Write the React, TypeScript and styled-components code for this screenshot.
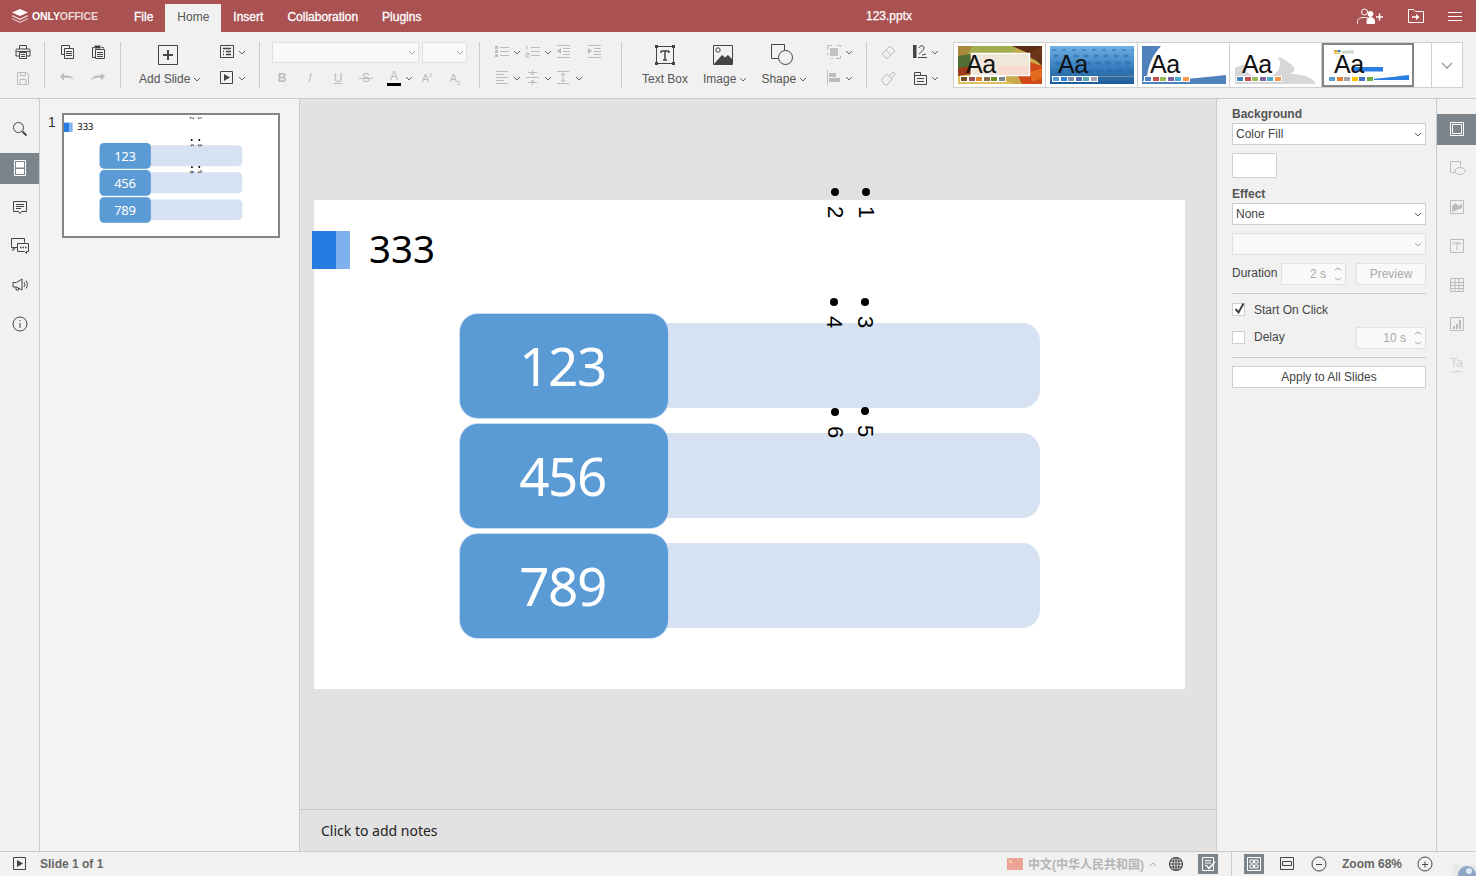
import React from 'react';
import styled, { createGlobalStyle } from 'styled-components';

const Global = createGlobalStyle`
  html, body { margin: 0; padding: 0; background: #f1f1f1; }
  body { font-family: "Liberation Sans", Arial, sans-serif; font-size: 12px; color: #444; }
  * { box-sizing: border-box; }
`;

const Page = styled.div`
  width: 1476px; height: 876px; display: flex; flex-direction: column; overflow: hidden; position: relative;
`;

/* ---------- header ---------- */
const Header = styled.header`
  height: 32px; flex: none; background: #aa5252; color: #fff; display: flex; align-items: flex-end; position: relative;
`;
const Logo = styled.div`
  width: 122px; height: 32px; padding-left: 12px; display: flex; align-items: center; gap: 4px; flex: none;
`;
const LogoText = styled.span`
  font-size: 10.6px; font-weight: 700; letter-spacing: -0.15px; color: #fff;
  em { font-style: normal; color: #ead7d7; }
`;
const Tab = styled.div<{ $active?: boolean }>`
  height: 28px; padding: 0 12px; display: flex; align-items: center; padding-bottom: 3px; white-space: nowrap;
  background: ${p => (p.$active ? '#f1f1f1' : 'transparent')};
  color: ${p => (p.$active ? '#555' : '#fff')};
  -webkit-text-stroke: ${p => (p.$active ? '0' : '0.3px')};
`;
const DocTitle = styled.div`
  position: absolute; left: 889px; top: 9px; transform: translateX(-50%); -webkit-text-stroke: 0.25px; line-height: 14px;
`;
const HeadTools = styled.div`
  margin-left: auto; height: 32px; display: flex; align-items: center; padding-right: 14px; gap: 24px;
`;

/* ---------- icons ---------- */
const Ico = styled.svg<{ $off?: boolean; $on?: boolean }>`
  display: block; flex: none; fill: none; stroke: currentColor; stroke-width: 1;
  color: ${p => (p.$on ? '#fff' : p.$off ? '#bcbcbc' : '#444')};
  .f { fill: currentColor; stroke: none; }
`;
const lines = (x: number, w: number, ys: number[]) => ys.map(y => `M${x} ${y}.5h${w}`).join('');
const P: Record<string, React.ReactNode> = {
  print: <><path d="M6.5 7V3.5h7V7M6.5 14h-3.5v-6a1 1 0 0 1 1-1h12a1 1 0 0 1 1 1v6h-3.5" /><path d="M6.5 10.5h7v6h-7zM8 12.5h4M8 14.5h4" /><path d="M3.500 9.500h13" /></>,
  save: <><path d="M4.500 4.500h9l2 2v10h-11zM7.500 4.500v3h5v-3M7 11.500h6v5H7z" /></>,
  copy: <><path d="M4.500 3.500h8v3M4.500 3.500v9h3" /><path d="M7.500 6.500h9v10h-9zM9 9.500h6M9 11.500h6M9 13.500h6" /></>,
  paste: <><path d="M4.500 5.500h2M13.500 5.500h2v1M4.500 5.500v10h3" /><path d="M6.500 3.500h6v3h-6z" className="f" /><path d="M7.500 7.500h9v9h-9zM9 10.500h6M9 12.500h6M9 14.500h6" /></>,
  undo: <path className="f" d="M3 8l4-3v2.500c5-.5 9 .5 10 4.500-2-2-5-2.500-10-2v3z" />,
  redo: <path className="f" d="M17 8l-4-3v2.500c-5-.5-9 .5-10 4.500 2-2 5-2.500 10-2v3z" />,
  layout: <><path d="M3.500 3.500h13v12h-13z" /><path d="M6 6.500h8M6 9.500h1M9 9.500h5M6 12.500h1M9 12.500h5" strokeWidth="1.3" /></>,
  play: <><path d="M3.500 3.500h12v12h-12z" /><path className="f" d="M7 6l6 3.500L7 13z" /></>,
  bullets: <><path d={lines(8, 9, [5, 9, 13])} /><path className="f" d="M3 4h3v3H3zM3 8h3v3H3zM3 12h3v3H3z" /></>,
  numbers: <><path d={lines(8, 9, [5, 9, 13])} /><path d="M4 3.500v4M3 11h3v1.500H3V15h3" /></>,
  outdent: <><path d={lines(3, 13, [3, 15])} /><path d={lines(9, 7, [6, 9, 12])} /><path className="f" d="M7 6v6L3 9z" /></>,
  indent: <><path d={lines(3, 13, [3, 15])} /><path d={lines(9, 7, [6, 9, 12])} /><path className="f" d="M3 6v6l4-3z" /></>,
  alignL: <path d="M4 3.500h12M4 6.500h8M4 9.500h12M4 12.500h8M4 15.500h12" />,
  alignV: <><path d="M3 9.500h13" /><path d="M5 4.500h9M5 14.500h9" /><path d="M9.500 2v5M8 5.500l1.500 1.500L11 5.500M9.500 17v-5M8 13.500L9.500 12l1.500 1.500" /></>,
  spacing: <><path d="M3 3.500h12M3 15.500h12M9 5v9" /><path d="M7 7l2-2 2 2M7 12l2 2 2-2" /></>,
  addbox: <><path d="M.500.500h19v19h-19z" /><path d="M10 5v10M5 10h10" strokeWidth="2" /></>,
  textbox: <><path d="M2.500 2.500h17v17h-17z" /><path className="f" d="M1 1h3v3H1zM18 1h3v3h-3zM1 18h3v3H1zM18 18h3v3h-3z" /><path d="M7 7h8M11 7v9M7 7v2M15 7v2M9 16h4" strokeWidth="1.5" /></>,
  image: <><path d="M.500.500h19v19h-19z" /><circle cx="5" cy="5" r="2.200" /><path className="f" d="M1 19l8-9 3 2.500 3-2.500 4 4v5z" /></>,
  shape: <><path d="M7 14.500H.500V.500h13V6" /><circle cx="14.500" cy="13.500" r="7" /></>,
  arrange: <><path d="M3.500 8V3.500H8M13 3.500h3.500V5M16.500 14v2.500H12" /><path className="f" d="M6 6h8v8H6z" opacity=".9" /><path d="M3.500 11v2M7 16.500h2" /></>,
  alignObj: <><path d="M3.500 2v15" /><path className="f" d="M5 5h7v4H5zM5 10h11v4H5z" /></>,
  eraser: <><path d="M3 12l7-7a1.500 1.500 0 0 1 2 0l3 3a1.500 1.500 0 0 1 0 2l-6 6H7z" /><path d="M7 8l5 5" /></>,
  colors: <><path className="f" d="M3 3h3.500v13H3z" /><path d="M9 6c1-3 5-3 5 0 0 2-3 4-5 6M8 15.500h9M12 13l4-1" /></>,
  brush: <><path d="M3 11l5-5 5 5-5 6H6l-3-4z" /><path d="M10 8l4-4 2 2-3 4" /></>,
  slideSize: <><path d="M4.500 4.500h6v3h6v9h-12zM7 10.500h7M7 13.500h7" /><path d="M4.500 7.500h6" /></>,
  search: <><circle cx="8.500" cy="8.500" r="5" /><path d="M12.500 12.500l4 4" strokeWidth="2" /></>,
  slidePanel: <><path d="M4.500 2.500h11v15h-11z" stroke="#fff" /><path className="f" d="M6 4h8v5.500H6zM6 11h8v5H6z" style={{ color: '#fff' }} /></>,
  comment: <><path d="M3.500 4.500h13v10h-5l-1.500 2-1.500-2h-5z" /><path d="M6 7.500h8M6 9.500h8M6 11.500h5" /></>,
  chat: <><path d="M1.500 2.500h13v4M7 11.500H1.500v-9M3 11.500v3l2.500-3" /><path d="M7.500 7.500h11v8h-2v2l-2-2h-7z" /><path d="M10 11.500h1.500M12.500 11.500H14M15 11.500h1.500" strokeWidth="1.500" /></>,
  speaker: <><path d="M3 7.500h3.500L12 4v11l-5.500-3H3zM6 12v3h2.500v-2" /><path d="M14 7c1 1.500 1 3.500 0 5M16 5.500c1.800 2.500 1.800 5.500 0 8" /></>,
  info: <><circle cx="10" cy="10" r="7" /><path d="M10 9v5" /><path className="f" d="M9.500 6h1v1.200h-1z" /></>,
  fit: <><path d="M3.500 3.500h13v13h-13z" stroke="#fff" /><path d="M5.500 5.500h9v9h-9z" stroke="#fff" /></>,
  rShape: <><path d="M9 14.500H3.500v-11h10V8" /><ellipse cx="13" cy="13" rx="5" ry="3.500" /></>,
  rImage: <><path d="M3.500 3.500h13v13h-13z" /><path className="f" d="M5 15V9l3-3 4 3 3-3v5z" /></>,
  rText: <><path d="M3.500 3.500h13v13h-13z" /><path d="M6.500 7h7M10 7v7M6.500 7v1.500M13.500 7v1.500" /></>,
  rTable: <><path d="M3.500 3.500h13v13h-13zM3.500 7.500h13M3.500 10.500h13M3.500 13.500h13M8 3.500v13M12 3.500v13" /></>,
  rChart: <><path d="M3.500 3.500h13v13h-13z" /><path className="f" d="M6 12h2v3H6zM9 10h2v5H9zM12 6h2v9h-2z" /></>,
  globe: <><circle cx="10" cy="10" r="6.500" strokeWidth="1.200" /><ellipse cx="10" cy="10" rx="3" ry="6.500" /><path d="M3.500 10h13M4.500 7h11M4.500 13h11M10 3.500v13" /></>,
  spell: <><path d="M4.500 3.500h11v13h-11z" stroke="#fff" /><path d="M7 6.500h6M7 9h6M7 11.500h2" stroke="#fff" /><path d="M9 12l2 2.500 6-7" stroke="#fff" strokeWidth="1.500" /></>,
  grid: <><path d="M3.500 3.500h13v13h-13z" stroke="#fff" /><path d="M6 6h3.500v3H6zM10.500 6H14v3h-3.500zM6 11h3.500v3H6zM10.500 11H14v3h-3.500z" stroke="#fff" /></>,
  fitWidth: <><path d="M3.500 3.500h13v12h-13z" /><path d="M5.500 7.500h9v4h-9z" /></>,
  minus: <><circle cx="10" cy="10" r="7" /><path d="M7 10.500h6" /></>,
  plus: <><circle cx="10" cy="10" r="7" /><path d="M7 10.500h6M10 7.500v6" /></>,
};
const Icon = ({ n, off, on, size = 20 }: { n: string; off?: boolean; on?: boolean; size?: number }) => (
  <Ico width={size} height={size} viewBox={`0 0 ${size} ${size}`} $off={off} $on={on}>{P[n]}</Ico>
);
const CaretSvg = styled.svg<{ $off?: boolean }>`
  display: block; flex: none; fill: none; stroke: ${p => (p.$off ? '#aaa' : '#666')}; stroke-width: 1;
`;
const Caret = ({ off }: { off?: boolean }) => (
  <CaretSvg $off={off} width="8" height="5" viewBox="0 0 8 5"><path d="M1 1l3 3 3-3" /></CaretSvg>
);

/* ---------- toolbar ---------- */
const Toolbar = styled.div`
  height: 67px; flex: none; background: #f1f1f1; border-bottom: 1px solid #cbcbcb; display: flex; padding-top: 10px; align-items: flex-start;
`;
const Sep = styled.div`
  width: 1px; height: 46px; background: #cbcbcb; flex: none;
`;
const Group = styled.div<{ $w: number; $pl: number; $gap?: number }>`
  width: ${p => p.$w}px; padding-left: ${p => p.$pl}px; height: 46px; flex: none; display: flex; gap: ${p => p.$gap ?? 0}px;
`;
const Col = styled.div<{ $ml?: number }>`
  display: flex; flex-direction: column; gap: 6px; flex: none; margin-left: ${p => p.$ml ?? 0}px;
`;
const Row = styled.div<{ $gap?: number }>`
  height: 20px; display: flex; align-items: center; gap: ${p => p.$gap ?? 0}px;
`;
const Drop = styled.div<{ $w?: number }>`
  display: flex; align-items: center; gap: 1px; width: ${p => p.$w ?? 29}px; flex: none;
`;
const Big = styled.div<{ $mr?: number }>`
  display: flex; flex-direction: column; align-items: center; height: 46px; flex: none; margin-right: ${p => p.$mr ?? 0}px;
`;
const BigIcon = styled.div<{ $shift?: number }>`
  height: 26px; display: flex; align-items: center; justify-content: center; margin-bottom: 4px; padding-right: ${p => p.$shift ?? 0}px;
`;
const BigLabel = styled.div`
  line-height: 14px; color: #555; display: flex; align-items: center; gap: 3px; white-space: nowrap;
`;
const ToolCombo = styled.div<{ $w: number }>`
  width: ${p => p.$w}px; height: 21px; border: 1px solid #e1e1e1; background: #f9f9f9; display: flex; align-items: center; justify-content: flex-end; padding-right: 2px; flex: none;
`;
const FontBtn = styled.span<{ $bold?: boolean; $italic?: boolean; $under?: boolean; $strike?: boolean; $small?: boolean; $ml?: number }>`
  width: 20px; flex: none; text-align: center; color: #bcbcbc; line-height: 14px; position: relative;
  font-size: ${p => (p.$small ? 11 : 12)}px; margin-left: ${p => p.$ml ?? 0}px;
  font-weight: ${p => (p.$bold ? 700 : 400)}; font-style: ${p => (p.$italic ? 'italic' : 'normal')};
  text-decoration: ${p => (p.$under ? 'underline' : 'none')};
  sup, sub { font-size: 6px; line-height: 0; }
  ${p => p.$strike && `&::after { content: ''; position: absolute; left: 3px; right: 3px; top: 7px; height: 1px; background: #bcbcbc; }`}
`;
const ColorA = styled.span`
  width: 20px; flex: none; display: flex; flex-direction: column; align-items: center; color: #bcbcbc; line-height: 12px;
  &::after { content: ''; width: 14px; height: 3px; background: #000; margin-top: 1px; }
`;

/* ---------- theme gallery ---------- */
const Gallery = styled.div`
  width: 510px; height: 46px; flex: none; border: 1px solid #cfcfcf; background: #fff; display: flex; margin-top: 0;
`;
const ThemeCard = styled.div<{ $selected?: boolean }>`
  width: 92px; flex: none; position: relative; background: #fff; border-right: 1px solid #cfcfcf;
  outline: ${p => (p.$selected ? '2px solid #858585' : 'none')}; outline-offset: -2px;
  svg { position: absolute; left: 4px; top: 3px; }
`;
const ThemeAa = styled.span`
  position: absolute; left: 12px; top: 7px; font-size: 25px; line-height: 29px; color: #111; letter-spacing: -0.5px;
`;
const Swatches = styled.div`
  position: absolute; left: 6px; top: 33px; display: flex; gap: 1.500px; padding: 1px; background: #fff;
`;
const Swatch = styled.i<{ $c: string }>`
  display: block; width: 6px; height: 3.500px; background: ${p => p.$c};
`;
const Spacer = styled.div`
  flex: 1; background: #fff; border-right: 1px solid #cfcfcf;
`;
const More = styled.div`
  width: 30px; flex: none; display: flex; align-items: center; justify-content: center;
`;

const themeArt: React.ReactNode[] = [
  <svg key="a" width="84" height="38" viewBox="0 0 84 38">
    <rect width="84" height="38" fill="#c9a94a" />
    <path d="M0 0h26L10 12 0 16z" fill="#a8893a" /><path d="M14 0h46l-6 8H10z" fill="#a3ad50" />
    <path d="M54 0h30v20l-12-12z" fill="#5b2c16" /><path d="M66 8l18 10V0z" fill="#6a3518" />
    <path d="M60 30l12-14 12 4v18H64z" fill="#cf4a16" /><path d="M72 26l12-4v10l-10 4z" fill="#e06a20" />
    <path d="M0 26l14 4 28 2 14 6H0z" fill="#dcc060" /><path d="M0 10l13-2v14L0 24z" fill="#4f6e34" />
    <path d="M0 22l13-2v8L0 30z" fill="#9c3a1c" />
    <rect x="13.500" y="7.500" width="58" height="22" fill="#f0e6da" stroke="#fff" strokeWidth="1.500" />
    <rect x="40" y="20" width="31" height="9" fill="#f8dccf" />
  </svg>,
  <svg key="b" width="84" height="38" viewBox="0 0 84 38">
    <defs><linearGradient id="g2" x1="0" y1="0" x2="0" y2="1"><stop offset="0" stopColor="#6fb0e6" /><stop offset=".55" stopColor="#3a80c0" /><stop offset="1" stopColor="#1e5c98" /></linearGradient></defs>
    <rect width="84" height="38" fill="url(#g2)" />
    {[4, 10, 17, 25].map((y, r) => Array.from({ length: 9 }).map((_, i) => (
      <ellipse key={`${r}-${i}`} cx={4 + i * 10 + r * 2} cy={y} rx={2 + r * 0.6} ry={1 + r * 0.4} fill="#2a6cab" opacity=".6" />
    )))}
    <path d="M0 30.500h84" stroke="#7c8c9c" />
  </svg>,
  <svg key="c" width="84" height="38" viewBox="0 0 84 38">
    <path d="M0 0h19C10 10 6 20 5 32L0 36z" fill="#4f81bd" />
    <path d="M0 38h84V29C60 32 30 34 0 36z" fill="#4f81bd" />
  </svg>,
  <svg key="d" width="84" height="38" viewBox="0 0 84 38">
    <path d="M1 38V22c8-4 14-4 20-6l24-5c6 2 10 6 14 9 3 4 1 6-3 8 10 0 22 2 26 10z" fill="#d7d7d7" />
    <rect x="10" y="6" width="36" height="24" rx="12" fill="#fff" />
  </svg>,
  <svg key="e" width="84" height="38" viewBox="0 0 84 38" style={{ left: 5, top: 4 }}>
    <rect x="7" y="3" width="3" height="2" fill="#e6a91f" /><rect x="10.500" y="3" width="3" height="2" fill="#3b78c9" />
    <rect x="7" y="5.500" width="6" height="1.500" fill="#e6c04a" /><rect x="15" y="3.500" width="12" height="3" fill="#b7c9b7" opacity=".7" />
    <rect x="26" y="20" width="30" height="4.500" fill="#2a7de1" />
    <path d="M2 32c30 2 56-1 80-4v5H2z" fill="#2a7de1" />
  </svg>,
];
const palettes = [
  ['#7a4d1e', '#9a5252', '#d9812b', '#8a6a44', '#6f8e22', '#7f8a8c'],
  ['#5b9bd5', '#2f7ed8', '#7f8fa9', '#4f6bb0', '#5aa6a8', '#a9a0b8'],
  ['#4f81bd', '#c0504d', '#9bbb59', '#8064a2', '#4bacc6', '#f79646'],
  ['#4f81bd', '#c0504d', '#9bbb59', '#8064a2', '#4bacc6', '#f79646'],
  ['#5b9bd5', '#ed7d31', '#a5a5a5', '#ffc000', '#4472c4', '#70ad47'],
];

/* ---------- main ---------- */
const Main = styled.main`
  flex: 1; display: flex; min-height: 0;
`;
const Rail = styled.nav<{ $right?: boolean }>`
  width: 40px; flex: none; background: #f1f1f1; display: flex; flex-direction: column; padding-top: 15px;
  ${p => (p.$right ? 'border-left: 1px solid #cbcbcb;' : 'border-right: 1px solid #cbcbcb;')}
`;
const RailItem = styled.div<{ $active?: boolean }>`
  height: 31px; margin-bottom: 8px; padding-bottom: 2px; display: flex; align-items: center; justify-content: center;
  background: ${p => (p.$active ? '#7d858c' : 'transparent')};
`;
const TaGlyph = styled.span`
  color: #cfcfcf; font-size: 12px; line-height: 11px; display: flex; flex-direction: column; align-items: center; margin-top: 8px;
  &::after { content: ''; width: 13px; height: 3px; border-top: 1px solid #cfcfcf; border-radius: 50% 50% 0 0; margin-top: 2px; }
`;
const ThumbPanel = styled.aside`
  width: 260px; flex: none; background: #f3f3f3; border-right: 1px solid #cbcbcb; display: flex; align-items: flex-start; padding: 14px 0 0 8px;
`;
const ThumbNum = styled.div`
  width: 14px; line-height: 16px; margin-top: 1px; color: #333; font-size: 14px; flex: none;
`;
const ThumbFrame = styled.div`
  width: 218px; height: 125px; border: 2px solid #848484; background: #fff; overflow: hidden; flex: none;
`;
const ThumbScale = styled.div`
  transform: scale(0.246); transform-origin: 0 0; width: 870px; height: 489px;
`;
const Center = styled.section`
  flex: 1; min-width: 0; background: #e2e2e2; display: flex; flex-direction: column;
`;
const Canvas = styled.div`
  flex: 1; padding: 101px 0 0 15px; min-height: 0;
`;
const Notes = styled.div`
  height: 42px; flex: none; border-top: 1px solid #cbcbcb; padding-left: 21px; display: flex; align-items: center;
  font-family: "Noto Sans", sans-serif; font-size: 14px; color: #222;
`;

/* ---------- slide (free canvas) ---------- */
const SlideBox = styled.div`
  width: 870px; height: 489px; background: #fff; position: relative; box-shadow: -1px 0 0 #fafafa;
`;
const Accent = styled.div<{ $x: number; $w: number; $c: string }>`
  position: absolute; top: 31px; height: 38px; left: ${p => p.$x}px; width: ${p => p.$w}px; background: ${p => p.$c};
`;
const SlideTitle = styled.div`
  position: absolute; left: 54px; top: 22px; font-family: "Noto Sans", sans-serif; font-size: 38.500px; line-height: 52px; color: #000;
`;
const Track = styled.div<{ $y: number }>`
  position: absolute; left: 345px; top: ${p => p.$y}px; width: 380px; height: 85px; background: #d6e1f1; border-radius: 0 18px 18px 0;
`;
const Pill = styled.div<{ $y: number }>`
  position: absolute; left: 145px; top: ${p => p.$y}px; width: 208px; height: 104px; border-radius: 18px; background: #5b9bd5;
  box-shadow: 0 0 0 1px #c9dcf0; display: flex; align-items: center; justify-content: center; padding: 0 3px 1px 0;
  color: #fff; font-family: "Noto Sans", sans-serif; font-size: 53px; letter-spacing: -1.500px; line-height: 1;
`;
const Mark = styled.div<{ $x: number; $y: number }>`
  position: absolute; left: ${p => p.$x}px; top: ${p => p.$y}px; width: 20px; display: flex; flex-direction: column; align-items: center;
`;
const Dot = styled.i`
  display: block; width: 8px; height: 8px; border-radius: 50%; background: #000; margin-bottom: 10px;
`;
const MarkNum = styled.span`
  writing-mode: vertical-rl; font-size: 22px; line-height: 22px; color: #000;
`;

const Slide = () => (
  <SlideBox>
    <Accent $x={-3} $w={24} $c="#267de1" />
    <Accent $x={21} $w={14} $c="#7fb1ee" />
    <SlideTitle>333</SlideTitle>
    {[123, 233, 343].map(y => <Track key={y} $y={y} />)}
    <Pill $y={114}>123</Pill>
    <Pill $y={224}>456</Pill>
    <Pill $y={334}>789</Pill>
    {[[541, -12, 1], [510, -12, 2], [540, 98, 3], [509, 98, 4], [540, 207, 5], [510, 208, 6]].map(([x, y, n]) => (
      <Mark key={n} $x={x} $y={y}><Dot /><MarkNum>{n}</MarkNum></Mark>
    ))}
  </SlideBox>
);

/* ---------- settings panel ---------- */
const Panel = styled.aside`
  width: 220px; flex: none; background: #f1f1f1; border-left: 1px solid #cbcbcb; padding: 8px 10px 0 15px; display: flex; flex-direction: column;
`;
const PanelLabel = styled.div<{ $mt?: number }>`
  line-height: 14px; font-weight: 700; color: #555; margin-top: ${p => p.$mt ?? 0}px; margin-bottom: 2px;
`;
const Combo = styled.div<{ $off?: boolean; $mt?: number }>`
  height: 22px; flex: none; margin-top: ${p => p.$mt ?? 0}px; display: flex; align-items: center; justify-content: space-between;
  padding: 0 3px 0 3px; border: 1px solid ${p => (p.$off ? '#e1e1e1' : '#cfcfcf')}; background: ${p => (p.$off ? '#f9f9f9' : '#fff')}; color: #444;
`;
const Swatchbox = styled.div`
  width: 45px; height: 25px; margin-top: 8px; background: #fff; border: 1px solid #cfcfcf; border-radius: 1px; flex: none;
`;
const PanelRow = styled.div<{ $mt: number }>`
  display: flex; align-items: center; flex: none; margin-top: ${p => p.$mt}px;
`;
const RowText = styled.span<{ $w?: number; $pt?: number; $pb?: number }>`
  flex: none; color: #444; line-height: 12px; ${p => p.$w && `width: ${p.$w}px;`}
  padding-top: ${p => p.$pt ?? 0}px; padding-bottom: ${p => p.$pb ?? 0}px;
`;
const Spin = styled.div<{ $w: number; $push?: boolean }>`
  width: ${p => p.$w}px; height: 22px; flex: none; margin-left: ${p => (p.$push ? 'auto' : '0')}; position: relative;
  border: 1px solid #e1e1e1; background: #f9f9f9; color: #a9a9a9; display: flex; align-items: center; justify-content: flex-end; padding-right: 19px;
`;
const SpinArrows = styled.svg`
  position: absolute; right: 3px; top: 3px; fill: none; stroke: #aaa;
`;
const GhostBtn = styled.div`
  width: 70px; height: 22px; margin-left: auto; border: 1px solid #e1e1e1; background: #f9f9f9; color: #a9a9a9; display: flex; align-items: center; justify-content: center; flex: none;
`;
const PanelSep = styled.hr<{ $mt: number }>`
  width: 100%; height: 1px; border: 0; background: #cbcbcb; margin: ${p => p.$mt}px 0 0; flex: none;
`;
const Check = styled.span<{ $up?: boolean }>`
  width: 13px; height: 13px; flex: none; border: 1px solid #cfcfcf; background: #fff; position: relative; margin-right: 9px; display: block;
  margin-bottom: ${p => (p.$up ? 2 : 0)}px;
  svg { position: absolute; left: 0; top: -3px; }
`;
const ApplyBtn = styled.div`
  height: 22px; margin-top: 8px; flex: none; border: 1px solid #cfcfcf; background: #fff; display: flex; align-items: center; justify-content: center; color: #444;
`;

/* ---------- status bar ---------- */
const Status = styled.footer`
  height: 25px; flex: none; background: #f1f1f1; border-top: 1px solid #cbcbcb; display: flex; align-items: center; position: relative; padding-left: 10px;
`;
const StatusText = styled.span<{ $ml?: number }>`
  font-weight: 700; color: #666; margin-left: ${p => p.$ml ?? 0}px; white-space: nowrap;
`;
const StatusRight = styled.div`
  margin-left: auto; padding-right: 41px; display: flex; align-items: center; height: 24px;
`;
const Lang = styled.span`
  margin-left: 5px; padding-bottom: 2px; font-weight: 700; color: #b5b5b5; font-family: "Liberation Sans", "Noto Sans CJK SC", sans-serif; white-space: nowrap; width: 116px; flex: none;
`;
const StatusBtn = styled.div<{ $ml: number; $active?: boolean }>`
  width: 20px; height: 20px; margin-left: ${p => p.$ml}px; flex: none; background: ${p => (p.$active ? '#7d858c' : 'transparent')}; display: flex; align-items: center; justify-content: center;
`;
const StatusSep = styled.div`
  width: 1px; height: 24px; background: #cbcbcb; margin-left: 13px; flex: none;
`;
const Avatar = styled.svg`
  position: absolute; right: 0; bottom: 0;
`;
const UpCaret = styled(CaretSvg)`
  transform: rotate(180deg); margin-left: 5px;
`;

export default function App() {
  return (
    <Page>
      <Global />
      <Header>
        <Logo>
          <svg width="16" height="14" viewBox="0 0 16 14">
            <path d="M8 0l8 3.500-8 3.500-8-3.500z" fill="#fff" />
            <path d="M0 6l8 3.500L16 6v1.300L8 11 0 7.300z" fill="#f0dcdc" />
            <path d="M0 9l8 3.500L16 9v1.300L8 14 0 10.300z" fill="#e0bcbc" />
          </svg>
          <LogoText>ONLY<em>OFFICE</em></LogoText>
        </Logo>
        <Tab>File</Tab>
        <Tab $active>Home</Tab>
        <Tab>Insert</Tab>
        <Tab>Collaboration</Tab>
        <Tab>Plugins</Tab>
        <DocTitle>123.pptx</DocTitle>
        <HeadTools>
          <svg width="27" height="16" viewBox="0 0 27 16" fill="none" stroke="#fff">
            <circle cx="7.500" cy="4" r="3" /><path d="M.500 15.500v-2c0-3 3-4 7-4 1.500 0 3 .2 4 .8" />
            <circle cx="13.500" cy="6" r="2.500" fill="#fff" /><path d="M10 15.500v-3c0-2 2-3 3.500-3s4 1 4 3v3z" fill="#fff" />
            <path d="M19 9h7M22.500 5.500v7" strokeWidth="1.500" />
          </svg>
          <svg width="16" height="14" viewBox="0 0 16 14" fill="none" stroke="#fff">
            <path d="M.500 13.500V.500h5l2 2h8v11z" /><path d="M4 8h6" strokeWidth="1.500" /><path d="M8 5l3.500 3L8 11z" fill="#fff" stroke="none" />
          </svg>
          <svg width="14" height="9" viewBox="0 0 14 9" stroke="#fff"><path d="M0 .500h14M0 4.500h14M0 8.500h14" /></svg>
        </HeadTools>
      </Header>

      <Toolbar>
        <Group $w={44} $pl={13}>
          <Col><Row><Icon n="print" /></Row><Row><Icon n="save" off /></Row></Col>
        </Group>
        <Sep />
        <Group $w={75} $pl={12} $gap={11}>
          <Col><Row><Icon n="copy" /></Row><Row><Icon n="undo" off /></Row></Col>
          <Col><Row><Icon n="paste" /></Row><Row><Icon n="redo" off /></Row></Col>
        </Group>
        <Sep />
        <Group $w={138} $pl={18} $gap={16}>
          <Big>
            <BigIcon $shift={4}><Icon n="addbox" /></BigIcon>
            <BigLabel>Add Slide<Caret /></BigLabel>
          </Big>
          <Col>
            <Row><Drop><Icon n="layout" /><Caret /></Drop></Row>
            <Row><Drop><Icon n="play" /><Caret /></Drop></Row>
          </Col>
        </Group>
        <Sep />
        <Group $w={219} $pl={12}>
          <Col>
            <Row $gap={3}>
              <ToolCombo $w={147}><Caret off /></ToolCombo>
              <ToolCombo $w={45}><Caret off /></ToolCombo>
            </Row>
            <Row $gap={8}>
              <FontBtn $bold>B</FontBtn>
              <FontBtn $italic>I</FontBtn>
              <FontBtn $under>U</FontBtn>
              <FontBtn $strike>S</FontBtn>
              <Drop><ColorA>A</ColorA><Caret /></Drop>
              <FontBtn $small $ml={-4}>A<sup>2</sup></FontBtn>
              <FontBtn $small>A<sub>2</sub></FontBtn>
            </Row>
          </Col>
        </Group>
        <Sep />
        <Group $w={141} $pl={12}>
          <Col>
            <Row $gap={2}>
              <Drop><Icon n="bullets" off /><Caret /></Drop>
              <Drop><Icon n="numbers" off /><Caret /></Drop>
              <Drop><Icon n="outdent" off /></Drop>
              <Drop><Icon n="indent" off /></Drop>
            </Row>
            <Row $gap={2}>
              <Drop><Icon n="alignL" off /><Caret /></Drop>
              <Drop><Icon n="alignV" off /><Caret /></Drop>
              <Drop><Icon n="spacing" off /><Caret /></Drop>
            </Row>
          </Col>
        </Group>
        <Sep />
        <Group $w={244} $pl={20} $gap={14}>
          <Big $mr={1}>
            <BigIcon><Icon n="textbox" size={22} /></BigIcon>
            <BigLabel>Text Box</BigLabel>
          </Big>
          <Big>
            <BigIcon $shift={4}><Icon n="image" /></BigIcon>
            <BigLabel>Image<Caret /></BigLabel>
          </Big>
          <Big>
            <BigIcon $shift={4}><Icon n="shape" size={22} /></BigIcon>
            <BigLabel>Shape<Caret /></BigLabel>
          </Big>
          <Col $ml={3}>
            <Row><Drop><Icon n="arrange" off /><Caret /></Drop></Row>
            <Row><Drop><Icon n="alignObj" off /><Caret /></Drop></Row>
          </Col>
        </Group>
        <Sep />
        <Group $w={86} $pl={12} $gap={11}>
          <Col><Row><Icon n="eraser" off /></Row><Row><Icon n="brush" off /></Row></Col>
          <Col>
            <Row><Drop><Icon n="colors" /><Caret /></Drop></Row>
            <Row><Drop><Icon n="slideSize" /><Caret /></Drop></Row>
          </Col>
        </Group>
        <Gallery>
          {themeArt.map((art, i) => (
            <ThemeCard key={i} $selected={i === 4}>
              {art}
              <ThemeAa>Aa</ThemeAa>
              <Swatches>{palettes[i].map((c, j) => <Swatch key={j} $c={c} />)}</Swatches>
            </ThemeCard>
          ))}
          <Spacer />
          <More>
            <svg width="12" height="7" viewBox="0 0 12 7" fill="none" stroke="#999" strokeWidth="1.300"><path d="M1 1l5 5 5-5" /></svg>
          </More>
        </Gallery>
      </Toolbar>

      <Main>
        <Rail>
          <RailItem><Icon n="search" /></RailItem>
          <RailItem $active><Icon n="slidePanel" on /></RailItem>
          <RailItem><Icon n="comment" /></RailItem>
          <RailItem><Icon n="chat" /></RailItem>
          <RailItem><Icon n="speaker" /></RailItem>
          <RailItem><Icon n="info" /></RailItem>
        </Rail>
        <ThumbPanel>
          <ThumbNum>1</ThumbNum>
          <ThumbFrame><ThumbScale><Slide /></ThumbScale></ThumbFrame>
        </ThumbPanel>
        <Center>
          <Canvas><Slide /></Canvas>
          <Notes>Click to add notes</Notes>
        </Center>
        <Panel>
          <PanelLabel>Background</PanelLabel>
          <Combo>Color Fill<Caret /></Combo>
          <Swatchbox />
          <PanelLabel $mt={9}>Effect</PanelLabel>
          <Combo>None<Caret /></Combo>
          <Combo $off $mt={8}><span /><Caret off /></Combo>
          <PanelRow $mt={8}>
            <RowText $w={49} $pb={2}>Duration</RowText>
            <Spin $w={65}>2 s
              <SpinArrows width="8" height="14" viewBox="0 0 8 14"><path d="M1 3l3-2 3 2M1 11l3 2 3-2" /></SpinArrows>
            </Spin>
            <GhostBtn>Preview</GhostBtn>
          </PanelRow>
          <PanelSep $mt={8} />
          <PanelRow $mt={8}>
            <Check>
              <svg width="13" height="14" viewBox="0 0 13 14" fill="none" stroke="#444" strokeWidth="2"><path d="M2.500 8l3 3.500 5-9" /></svg>
            </Check>
            <RowText $pt={2}>Start On Click</RowText>
          </PanelRow>
          <PanelRow $mt={11}>
            <Check $up />
            <RowText $pb={2}>Delay</RowText>
            <Spin $w={70} $push>10 s
              <SpinArrows width="8" height="14" viewBox="0 0 8 14"><path d="M1 3l3-2 3 2M1 11l3 2 3-2" /></SpinArrows>
            </Spin>
          </PanelRow>
          <PanelSep $mt={8} />
          <ApplyBtn>Apply to All Slides</ApplyBtn>
        </Panel>
        <Rail $right>
          <RailItem $active><Icon n="fit" on /></RailItem>
          <RailItem><Icon n="rShape" off /></RailItem>
          <RailItem><Icon n="rImage" off /></RailItem>
          <RailItem><Icon n="rText" off /></RailItem>
          <RailItem><Icon n="rTable" off /></RailItem>
          <RailItem><Icon n="rChart" off /></RailItem>
          <RailItem><TaGlyph>Ta</TaGlyph></RailItem>
        </Rail>
      </Main>

      <Status>
        <Icon n="play" />
        <StatusText $ml={10}>Slide 1 of 1</StatusText>
        <StatusRight>
          <svg width="16" height="12" viewBox="0 0 16 12"><rect width="16" height="12" fill="#eba497" /><circle cx="3.500" cy="3.500" r="1.500" fill="#f3d9a0" /></svg>
          <Lang>中文(中华人民共和国)</Lang>
          <UpCaret $off width="8" height="5" viewBox="0 0 8 5"><path d="M1 1l3 3 3-3" /></UpCaret>
          <StatusBtn $ml={9}><Icon n="globe" /></StatusBtn>
          <StatusBtn $ml={12} $active><Icon n="spell" on /></StatusBtn>
          <StatusSep />
          <StatusBtn $ml={12} $active><Icon n="grid" on /></StatusBtn>
          <StatusBtn $ml={13}><Icon n="fitWidth" /></StatusBtn>
          <StatusBtn $ml={12}><Icon n="minus" /></StatusBtn>
          <StatusText $ml={13}>Zoom 68%</StatusText>
          <StatusBtn $ml={13}><Icon n="plus" /></StatusBtn>
        </StatusRight>
        <Avatar width="23" height="11" viewBox="0 0 23 11">
          <rect width="23" height="11" fill="#e8e8e8" /><circle cx="14" cy="10" r="9" fill="#8fa7c6" /><circle cx="16" cy="6" r="3" fill="#dfe7f2" />
        </Avatar>
      </Status>
    </Page>
  );
}
